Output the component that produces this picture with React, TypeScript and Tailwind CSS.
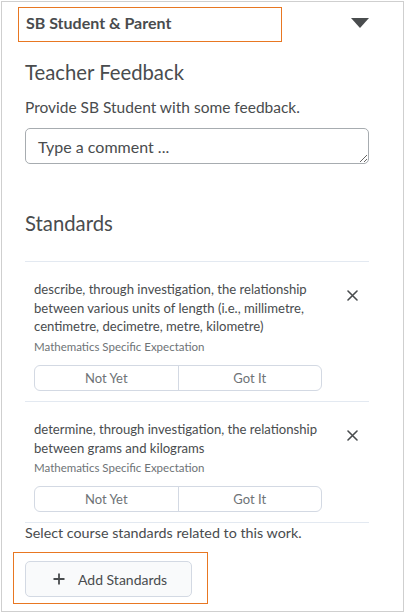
import React from "react";

const standards = [
  {
    text: "describe, through investigation, the relationship between various units of length (i.e., millimetre, centimetre, decimetre, metre, kilometre)",
    kind: "Mathematics Specific Expectation",
  },
  {
    text: "determine, through investigation, the relationship between grams and kilograms",
    kind: "Mathematics Specific Expectation",
  },
];

function StandardItem({ text, kind }: { text: string; kind: string }) {
  return (
    <div className="pl-[9px] pt-[18px] pb-[10px] border-b border-[#e3e9f1]">
      <div className="flex">
        <p className="w-[300px] text-[13.1px] leading-[18.65px] text-[#494c4e]">{text}</p>
        <button className="ml-auto mr-[11px] mt-[10px] h-[11px] w-[11px] self-start">
          <svg width="11" height="11" viewBox="0 0 11 11">
            <path d="M1 1 L10 10 M10 1 L1 10" stroke="#494c4e" strokeWidth="1.6" strokeLinecap="round" />
          </svg>
        </button>
      </div>
      <div className="mt-[3px] text-[11.5px] leading-4 text-[#6e7376]">{kind}</div>
      <div className="mt-[10px] flex h-[26px] w-[288px] rounded-[6px] border border-[#d3d9e3] text-[13px] leading-6 text-[#6e7376]">
        <button className="flex-1 text-center">Not Yet</button>
        <div className="w-px bg-[#d3d9e3]" />
        <button className="flex-1 text-center">Got It</button>
      </div>
    </div>
  );
}

export default function App() {
  return (
    <div className="ml-px mt-px h-[611px] w-[403px] border border-[#cfcfcf] bg-white font-['Lato','Liberation_Sans',sans-serif] text-[#494c4e]">
      {/* header with student selector */}
      <div className="flex pl-[16px] pt-[5px]">
        <div className="h-[35px] w-[264px] border border-[#e87722] pl-[7px] pt-[3px] text-[16px] font-bold leading-6">
          SB Student &amp; Parent
        </div>
        <svg className="ml-[69px] mt-[11px]" width="18" height="10" viewBox="0 0 18 10">
          <polygon points="0,0 18,0 9,10" fill="#494c4e" />
        </svg>
      </div>

      <div className="ml-[23px] w-[344px]">
        <h2 className="mt-[16px] text-[20.3px] leading-7">Teacher Feedback</h2>
        <p className="mt-[10px] text-[15.5px] leading-[22px]">Provide SB Student with some feedback.</p>
        <textarea
          className="mt-[10px] block h-[36px] w-[344px] rounded-[5px] border border-[#a7acb0] pl-[12px] pt-[6px] text-[16px] leading-6 text-[#494c4e] placeholder:text-[#494c4e] outline-none"
          placeholder="Type a comment ..."
        />

        <h2 className="mt-[45px] text-[20.3px] leading-7">Standards</h2>
        <div className="mt-[24px] border-t border-[#e3e9f1]">
          {standards.map((s, i) => (
            <StandardItem key={i} text={s.text} kind={s.kind} />
          ))}
        </div>
        <p className="text-[14.3px] leading-5">Select course standards related to this work.</p>

        <div className="-ml-[12px] mt-[9px] h-[52px] w-[195px] border border-[#e87722] pl-[11px] pt-[8px]">
          <button className="flex h-[36px] w-[167px] items-center rounded-[5px] border border-[#d3d9e3] bg-[#f9fafb] pl-[27px] text-[14px] text-[#494c4e]">
            <svg width="12" height="12" viewBox="0 0 12 12">
              <path d="M6 0.5 V11.5 M0.5 6 H11.5" stroke="#494c4e" strokeWidth="1.8" />
            </svg>
            <span className="ml-[13px]">Add Standards</span>
          </button>
        </div>
      </div>
    </div>
  );
}
